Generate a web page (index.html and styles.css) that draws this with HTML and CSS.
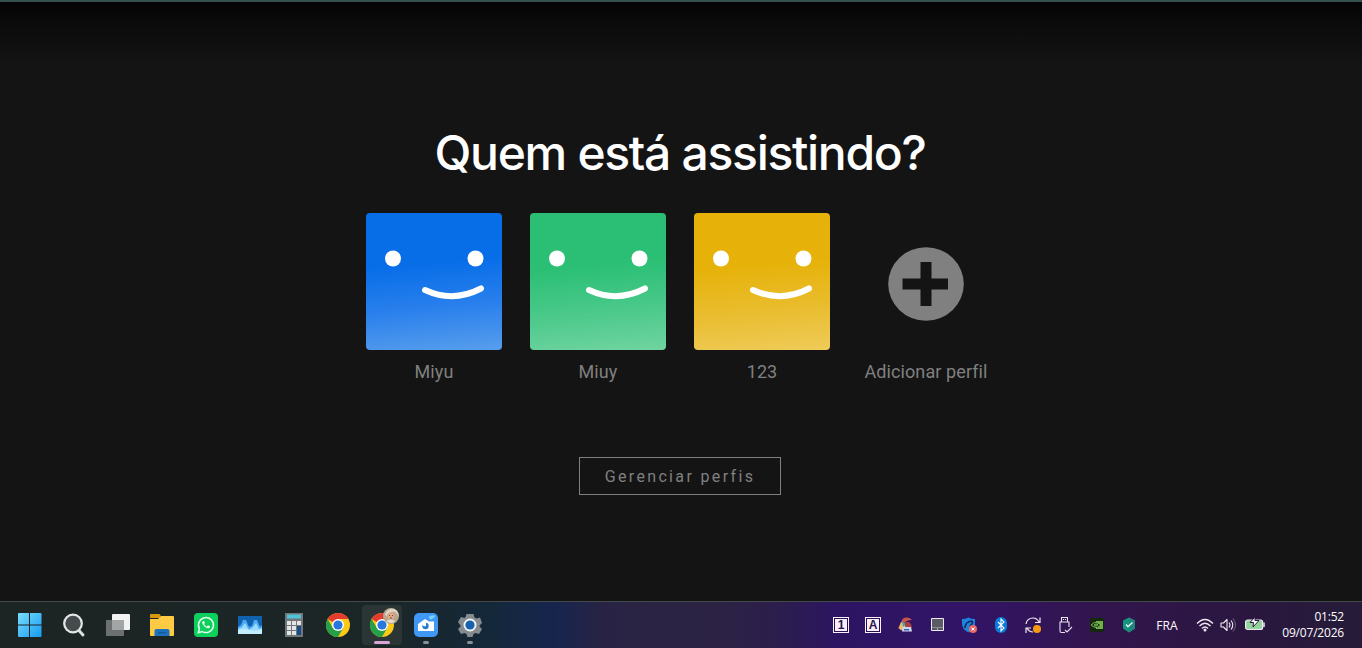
FILE: index.html
```html
<!DOCTYPE html>
<html lang="pt">
<head>
	<title>Quem está assistindo?</title>
	<meta charset="utf-8">
	<link rel="stylesheet" href="styles.css">
</head>
<body>
	<div class="main">
		<h1>Quem está assistindo?</h1>
		<ul class="profiles">
			<li>
				<svg class="avatar blue" viewBox="0 0 136 137"><circle cx="27" cy="45.500" r="8"/><circle cx="109.500" cy="45.500" r="8"/><path d="M59 77Q87 90 115 75.500"/></svg>
				<span>Miyu</span>
			</li>
			<li>
				<svg class="avatar green" viewBox="0 0 136 137"><circle cx="27" cy="45.500" r="8"/><circle cx="109.500" cy="45.500" r="8"/><path d="M59 77Q87 90 115 75.500"/></svg>
				<span>Miuy</span>
			</li>
			<li>
				<svg class="avatar yellow" viewBox="0 0 136 137"><circle cx="27" cy="45.500" r="8"/><circle cx="109.500" cy="45.500" r="8"/><path d="M59 77Q87 90 115 75.500"/></svg>
				<span>123</span>
			</li>
			<li>
				<svg class="add" viewBox="0 0 136 137"><ellipse cx="68" cy="71" rx="37.800" ry="36.800" fill="#808080"/><path d="M62.500 49h11v16.500H90v11H73.500V93h-11V76.500h-18v-11h18z" fill="#141414"/></svg>
				<span>Adicionar perfil</span>
			</li>
		</ul>
		<a class="manage">Gerenciar perfis</a>
	</div>

	<div class="taskbar">
		<ul class="apps">
			<li>
				<svg width="24" height="24" viewBox="0 0 24 24">
					<defs><linearGradient id="win" x1="0" y1="0" x2="1" y2="1"><stop offset="0" stop-color="#7bdcff"/><stop offset="1" stop-color="#159cf0"/></linearGradient></defs>
					<path fill="url(#win)" d="M0 1Q0 0 1 0h10v11.500H0zM12 0H22.500q1 0 1 1v10.500H12zM0 12.500h11V24H1q-1 0-1-1zM12 12.500h11.500V23q0 1-1 1H12z"/>
				</svg>
			</li>
			<li>
				<svg width="24" height="24" viewBox="0 0 24 24"><path d="M16.500 17l4.500 5" stroke="#dcdede" stroke-width="3" stroke-linecap="round"/><circle cx="11" cy="10.500" r="8.800" fill="#454b4c" stroke="#e4e6e6" stroke-width="2.200"/></svg>
			</li>
			<li>
				<svg width="24" height="24" viewBox="0 0 24 24"><rect x="6" y="1" width="18" height="16" rx="1" fill="#f1f2f2"/><rect x="0" y="7" width="18" height="16" rx="1" fill="#6c7070"/><path d="M6 7h12v10H6z" fill="#a2a5a5"/></svg>
			</li>
			<li>
				<svg width="24" height="24" viewBox="0 0 24 24"><path d="M0 2q0-1 1-1h8q1.500 0 1.500 1.500V5H0z" fill="#d8960c"/><path d="M0 6h8l3-3h12q1 0 1 1v18q0 1-1 1H1q-1 0-1-1z" fill="#ffcb45"/><path d="M4.500 23v-5q0-2 2-2h11q2 0 2 2v5z" fill="#1c72bd"/><path d="M8 19h8v1.500H8z" fill="#155a98"/></svg>
			</li>
			<li>
				<svg width="24" height="24" viewBox="0 0 24 24"><rect width="24" height="24" rx="4" fill="#0bd05b"/><path d="M4.300 19.700l1.100-4A7.500 7.500 0 1 1 8.300 18.600z" fill="none" stroke="#e7fff0" stroke-width="1.500"/><path d="M9 8c-1.500 1-.8 3 .8 4.800 1.600 1.800 4 3.200 5.400 2.200 1-.8.900-1.500.7-1.700l-1.900-1-1.200 1.200c-1-.4-2.300-1.600-2.700-2.600l.8-1-.8-2z" fill="#e7fff0"/></svg>
			</li>
			<li>
				<svg width="24" height="24" viewBox="0 0 24 24"><path d="M0 3h24v18H0z" fill="#1162ae"/><path d="M0 14l3-2 2-5h3l3 7 3-1 2-6h3l3 7 2-2v9H0z" fill="#4daaf0"/><path d="M0 16l4-2 3-4 4 7 4-3 3-4 3 6 3-1v6H0z" fill="#9adcff"/><path d="M0 17q6-2 12 0t12-1v5H0z" fill="#c4edff"/></svg>
			</li>
			<li>
				<svg width="24" height="24" viewBox="0 0 24 24"><path d="M3 0h18v24H3z" fill="#727678"/><path d="M5 1.500h14v4H5z" fill="#51c3db"/><path d="M5 8h4v4H5zM10 8h4v4h-4zM15 8h4v4h-4zM5 13h4v4H5zM10 13h4v4h-4zM5 18h4v4H5zM10 18h4v4h-4z" fill="#e2e4e5"/><path d="M15 13h4v9h-4z" fill="#154b8a"/></svg>
			</li>
			<li>
				<svg width="24" height="24" viewBox="0 0 24 24"><g id="chrome"><circle cx="12" cy="12" r="12" fill="#fdc918"/><path d="M12 12L1.600 6A12 12 0 0 1 22.400 6H12z" fill="#e33b2e"/><path d="M1.600 6A12 12 0 0 0 12 24l5.200-9L12 12 6.800 15z" fill="#24a148"/><circle cx="12" cy="12" r="6" fill="#fff"/><circle cx="12" cy="12" r="4.600" fill="#2678df"/></g></svg>
			</li>
			<li class="current">
				<svg width="24" height="24" viewBox="0 0 24 24"><use href="#chrome"/><circle cx="21" cy="3" r="8" fill="#b9a58f"/><path d="M15 1q3-6 9-5 5 2 4.500 8-2-6-7-5t-5 5z" fill="#ded6c6"/><circle cx="21" cy="3" r="3.600" fill="#dfa98a"/><path d="M16 8q5-3 9 0-3 4-9 0z" fill="#e4ddd2"/><path d="M19 2.500h1M22 2.500h1M20 5h2" stroke="#7b4c3c"/></svg>
			</li>
			<li class="open">
				<svg width="24" height="24" viewBox="0 0 24 24"><rect width="24" height="24" rx="5" fill="#3f98f5"/><path d="M4 11l7-5 4 2.500h5V18H4z" fill="#fff"/><circle cx="11.500" cy="13" r="3.200" fill="#277dcc"/><path d="M8 9.500h4V13q-4 1-4-3.500z" fill="#fff"/><circle cx="17" cy="4.500" r="2" fill="#79d4fb"/><circle cx="19.500" cy="3.500" r="1.500" fill="#79d4fb"/></svg>
			</li>
			<li class="open">
				<svg width="24" height="24" viewBox="0 0 24 24"><path d="M8.500 1h7l1 3.500 2 1 3.500-1 2 5.500-2.500 2.500v1L24 16l-3 5-3.500-1-2 1-1 3h-5l-1-3-2-1L3 21l-3-5 2.500-2.500v-1L0 9l3-5 3.500 1 1-1z" fill="#868b90"/><circle cx="12" cy="12" r="6.500" fill="#eef3f7"/><circle cx="12" cy="12" r="4.600" fill="#1862ad"/></svg>
			</li>
		</ul>
		<ul class="tray">
			<li><span class="key">1</span></li>
			<li><span class="key">A</span></li>
			<li>
				<svg width="16" height="16" viewBox="0 0 16 16"><path d="M15 3Q13 0 9 .5 5 1 4.500 4.500L1 11l3 2.500 4-3L7 6q3-3 8-3z" fill="#c9534d"/><path d="M4 5l4 2 1 4-5 2-2-2z" fill="#e3c36b"/><path d="M5 4l4 3-3 3z" fill="#4f9caa"/><path d="M8 5q4-1 6 2l1 4H9z" fill="#a93e42"/><path d="M5.500 10H14l1 4.500H5z" fill="#cbd7ee"/><path d="M7 12h5v1.500H7z" fill="#3c65ac"/></svg>
			</li>
			<li>
				<svg width="16" height="16" viewBox="0 0 16 16"><path d="M2.500 1.500h12v12h-12z" fill="#5b5b63" stroke="#eee6f2"/><path d="M3 10.500h11" stroke="#8d8c92"/><path d="M3 12h11" stroke="#55545c"/><path d="M8 12h1" stroke="#fff"/></svg>
			</li>
			<li>
				<svg width="16" height="16" viewBox="0 0 16 16"><path d="M1 2q4 0 6.500-1.500Q10 2 14 2v5q0 5-6.500 8.500Q1 12 1 7z" fill="#1b84df"/><path d="M4 11q0-4 3.500-6t4 0-3 4" fill="none" stroke="#17285d" stroke-width="1.600"/><circle cx="7.500" cy="7.500" r="1.500" fill="#1b84df"/><circle cx="12" cy="12" r="4" fill="#e96767"/><path d="M10.500 10.500l3 3m0-3l-3 3" stroke="#fff"/></svg>
			</li>
			<li>
				<svg width="16" height="16" viewBox="0 0 16 16"><rect x="2" width="12" height="16" rx="6" fill="#087bdc"/><path d="M5 5l6 6-3 3V2l3 3-6 6" fill="none" stroke="#fff" stroke-width="1.100"/></svg>
			</li>
			<li>
				<svg width="18" height="18" viewBox="0 0 18 18"><path d="M2 8Q3 2 9 2q4 0 6 4M16 1.500v5h-5M9 16q-4 0-6-4M2 17v-5h5" fill="none" stroke="#f2eaf5" stroke-width="1.200"/><circle cx="13" cy="13" r="4" fill="#f59b13"/></svg>
			</li>
			<li>
				<svg width="18" height="18" viewBox="0 0 18 18"><path d="M5.500 6V1.500h6V6M9 16.500H5.500q-1.500 0-1.500-1.500V6h9v5M9 14l2 2 5-5M7.500 3v1M9.500 3v1" fill="none" stroke="#e9e0ed" stroke-width="1.100"/></svg>
			</li>
			<li>
				<svg width="14" height="14" viewBox="0 0 14 14"><rect width="14" height="14" fill="#13280f"/><path d="M6 3h7v8H6z" fill="#71ae4b"/><path d="M2 7q3-4 6-2l3 2q-3 4-6 2z" fill="#18330f"/><path d="M1 7q3-4 7-2l3 2q-4 4-7 2zM4 7q2-2 4 0-2 2-4 0z" fill="none" stroke="#83c75a" stroke-width=".9"/></svg>
			</li>
			<li>
				<svg width="14" height="16" viewBox="0 0 14 16"><path d="M7 .5l6 3v8l-6 4-6-4v-8z" fill="#14957f"/><path d="M7 .5l6 3v8l-6 4z" fill="#20867c"/><path d="M4 7.500l2 2.200L10.500 5.500" fill="none" stroke="#f3ffff" stroke-width="1.300"/></svg>
			</li>
		</ul>
		<span class="lang">FRA</span>
		<div class="status">
			<svg width="18" height="16" viewBox="0 0 18 16"><path d="M1 6.500Q9-1.500 17 6.500M3.500 9Q9 3.500 14.500 9M6 11.500q3-3 6 0" fill="none" stroke="#f1eaf4" stroke-width="1.300"/><circle cx="9" cy="13" r="1.500" fill="#f1eaf4"/></svg>
			<svg width="18" height="16" viewBox="0 0 18 16"><path d="M2 6h2.500L8 2.500v11L4.500 10H2z" fill="none" stroke="#f1eaf4" stroke-width="1.100" stroke-linejoin="round"/><path d="M10 5.500q2 2.500 0 5M12 3.500q3.500 4.500 0 9" fill="none" stroke="#f1eaf4" stroke-width="1.100"/><path d="M14 1.500q5 6.500 0 13" fill="none" stroke="#756681"/></svg>
			<svg class="battery" width="22" height="16" viewBox="0 0 22 16"><rect x="1.600" y="3" width="17" height="9.500" rx="2" fill="#94d39b" stroke="#f1eaf4" stroke-width="1.200"/><path d="M20 5.500v4.500" stroke="#f1eaf4" stroke-width="1.500"/><path d="M11 0L6 5.500h3.500L9 10l6-6.500h-4z" fill="#fff" stroke="#2a1742" stroke-width="1"/></svg>
		</div>
		<div class="clock">01:52<br>09/07/2026</div>
	</div>
</body>
</html>
```

FILE: styles.css
```css
*{box-sizing:border-box}
body{margin:0;height:648px;overflow:hidden;display:flex;flex-direction:column;background:#141414;font-family:Roboto,"Liberation Sans",sans-serif}
ul{list-style:none;margin:0;padding:0}
svg{display:block;flex:none;overflow:visible}

.main{height:601px;padding:123px 2px 0 0;border-top:2px solid #36504e;background:linear-gradient(#040404,#0b0b0b 22px,#141414 65px);display:flex;flex-direction:column;align-items:center}
.main h1{margin:0;height:56px;line-height:56px;font-family:Inter,"Liberation Sans",sans-serif;font-size:48px;font-weight:450;letter-spacing:-1.3px;color:#fff;white-space:nowrap}
.profiles{display:flex;gap:28px;margin-top:32px}
.profiles li{width:136px;text-align:center;color:#808080;font-size:18px;line-height:22px}
.profiles span{display:block;margin-top:11px;letter-spacing:.1px;white-space:nowrap}
.avatar,.add{width:136px;height:137px}
.avatar{border-radius:4px}
.avatar circle{fill:#fff}
.avatar path{fill:none;stroke:#fff;stroke-width:6;stroke-linecap:round}
.blue{background:linear-gradient(175deg,#086ee8 38%,#2a80ec 68%,#579eed)}
.green{background:linear-gradient(175deg,#2abf74 38%,#48c889 68%,#70d4a1)}
.yellow{background:linear-gradient(175deg,#e6b209 38%,#e9bc2c 68%,#efcb58)}
.manage{width:202px;height:38px;margin-top:74px;border:1px solid #808080;color:#808080;font-size:16px;line-height:37px;letter-spacing:2.35px;text-align:center}

.taskbar{height:47px;display:flex;align-items:center;border-top:1px solid #424949;background:linear-gradient(90deg,#1d2424 0,#1b2626 380px,#14283a 490px,#17254e 555px,#282344 605px,#2c2343 710px,#2b1e4c 780px,#2d1463 840px,#321466 970px,#32154e 1090px,#2a173f 1250px,#251c38)}
.apps{display:flex;gap:4px;padding-left:10px}
.apps li{position:relative;width:40px;height:40px;display:flex;align-items:center;justify-content:center;border-radius:4px}
.apps .current{background:#2b3535}
.apps .current:after,.apps .open:after{content:"";position:absolute;bottom:1px;left:17px;width:6px;height:3px;border-radius:2px;background:#899096}
.apps .current:after{left:12px;width:16px;background:#d9a4d8}
.tray{display:flex;margin-left:auto}
.tray li{width:32px;display:flex;align-items:center;justify-content:center}
.key{width:16px;height:16px;border:1px solid #f8effa;outline:1px solid #28104f;outline-offset:-2px;background:#f8effa;color:#28134c;font:bold 12px/14px "Liberation Sans",sans-serif;text-align:center}
.lang{width:44px;text-align:center;color:#fff;font:12px "Open Sans",sans-serif;letter-spacing:.1px}
.status{display:flex;width:80px;padding-left:7px;gap:5px}
.battery{margin-left:2px}
.clock{width:93px;padding-right:18px;text-align:right;color:#fff;font:12px/16px "Open Sans",sans-serif;letter-spacing:-.2px}
```
